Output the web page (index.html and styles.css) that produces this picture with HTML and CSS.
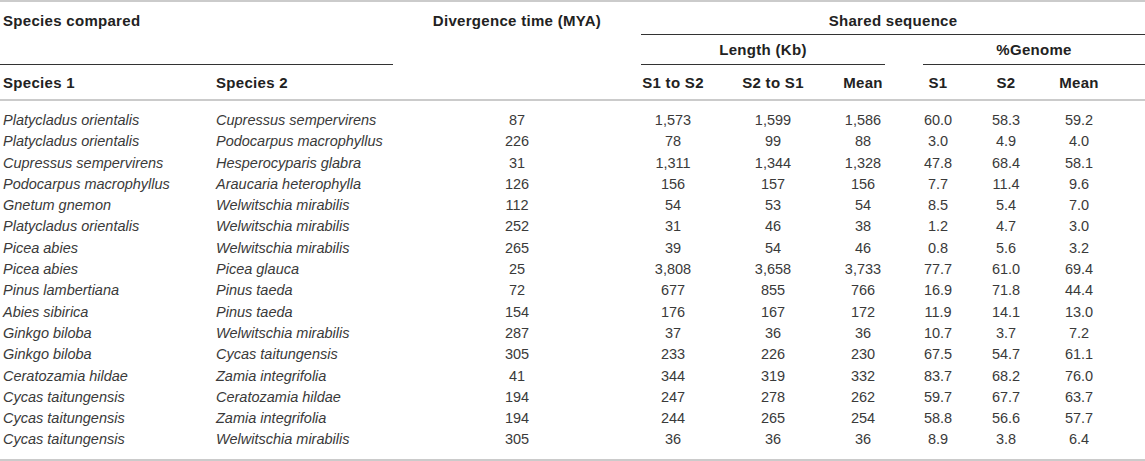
FILE: index.html
```html
<!DOCTYPE html>
<html lang="en">
<head>
    <meta charset="UTF-8">
    <meta name="viewport" content="width=device-width, initial-scale=1.0">
    <title>Shared sequence between species</title>
    <link rel="stylesheet" href="styles.css">
</head>
<body>

    <table class="data-table">
        <colgroup>
            <col class="c-sp1">
            <col class="c-sp2">
            <col class="c-div">
            <col class="c-s1s2">
            <col class="c-s2s1">
            <col class="c-lmean">
            <col class="c-gap">
            <col class="c-g1">
            <col class="c-g2">
            <col class="c-gmean">
            <col class="c-fill">
        </colgroup>
        <thead>
            <tr class="row-a">
                <th colspan="2" rowspan="2" class="left group">Species compared</th>
                <th rowspan="3" class="div-head">Divergence time (MYA)</th>
                <th colspan="8" class="group">Shared sequence</th>
            </tr>
            <tr class="row-b">
                <th colspan="3" class="group sub">Length (Kb)</th>
                <th class="sub"></th>
                <th colspan="4" class="group sub">%Genome</th>
            </tr>
            <tr class="row-c">
                <th class="left last">Species 1</th>
                <th class="left last">Species 2</th>
                <th class="last">S1 to S2</th>
                <th class="last">S2 to S1</th>
                <th class="last">Mean</th>
                <th class="last"></th>
                <th class="last">S1</th>
                <th class="last">S2</th>
                <th class="last">Mean</th>
                <th class="last"></th>
            </tr>
        </thead>
        <tbody>
            <tr><td class="sp">Platycladus orientalis</td><td class="sp">Cupressus sempervirens</td><td>87</td><td>1,573</td><td>1,599</td><td>1,586</td><td></td><td>60.0</td><td>58.3</td><td>59.2</td><td></td></tr>
            <tr><td class="sp">Platycladus orientalis</td><td class="sp">Podocarpus macrophyllus</td><td>226</td><td>78</td><td>99</td><td>88</td><td></td><td>3.0</td><td>4.9</td><td>4.0</td><td></td></tr>
            <tr><td class="sp">Cupressus sempervirens</td><td class="sp">Hesperocyparis glabra</td><td>31</td><td>1,311</td><td>1,344</td><td>1,328</td><td></td><td>47.8</td><td>68.4</td><td>58.1</td><td></td></tr>
            <tr><td class="sp">Podocarpus macrophyllus</td><td class="sp">Araucaria heterophylla</td><td>126</td><td>156</td><td>157</td><td>156</td><td></td><td>7.7</td><td>11.4</td><td>9.6</td><td></td></tr>
            <tr><td class="sp">Gnetum gnemon</td><td class="sp">Welwitschia mirabilis</td><td>112</td><td>54</td><td>53</td><td>54</td><td></td><td>8.5</td><td>5.4</td><td>7.0</td><td></td></tr>
            <tr><td class="sp">Platycladus orientalis</td><td class="sp">Welwitschia mirabilis</td><td>252</td><td>31</td><td>46</td><td>38</td><td></td><td>1.2</td><td>4.7</td><td>3.0</td><td></td></tr>
            <tr><td class="sp">Picea abies</td><td class="sp">Welwitschia mirabilis</td><td>265</td><td>39</td><td>54</td><td>46</td><td></td><td>0.8</td><td>5.6</td><td>3.2</td><td></td></tr>
            <tr><td class="sp">Picea abies</td><td class="sp">Picea glauca</td><td>25</td><td>3,808</td><td>3,658</td><td>3,733</td><td></td><td>77.7</td><td>61.0</td><td>69.4</td><td></td></tr>
            <tr><td class="sp">Pinus lambertiana</td><td class="sp">Pinus taeda</td><td>72</td><td>677</td><td>855</td><td>766</td><td></td><td>16.9</td><td>71.8</td><td>44.4</td><td></td></tr>
            <tr><td class="sp">Abies sibirica</td><td class="sp">Pinus taeda</td><td>154</td><td>176</td><td>167</td><td>172</td><td></td><td>11.9</td><td>14.1</td><td>13.0</td><td></td></tr>
            <tr><td class="sp">Ginkgo biloba</td><td class="sp">Welwitschia mirabilis</td><td>287</td><td>37</td><td>36</td><td>36</td><td></td><td>10.7</td><td>3.7</td><td>7.2</td><td></td></tr>
            <tr><td class="sp">Ginkgo biloba</td><td class="sp">Cycas taitungensis</td><td>305</td><td>233</td><td>226</td><td>230</td><td></td><td>67.5</td><td>54.7</td><td>61.1</td><td></td></tr>
            <tr><td class="sp">Ceratozamia hildae</td><td class="sp">Zamia integrifolia</td><td>41</td><td>344</td><td>319</td><td>332</td><td></td><td>83.7</td><td>68.2</td><td>76.0</td><td></td></tr>
            <tr><td class="sp">Cycas taitungensis</td><td class="sp">Ceratozamia hildae</td><td>194</td><td>247</td><td>278</td><td>262</td><td></td><td>59.7</td><td>67.7</td><td>63.7</td><td></td></tr>
            <tr><td class="sp">Cycas taitungensis</td><td class="sp">Zamia integrifolia</td><td>194</td><td>244</td><td>265</td><td>254</td><td></td><td>58.8</td><td>56.6</td><td>57.7</td><td></td></tr>
            <tr><td class="sp">Cycas taitungensis</td><td class="sp">Welwitschia mirabilis</td><td>305</td><td>36</td><td>36</td><td>36</td><td></td><td>8.9</td><td>3.8</td><td>6.4</td><td></td></tr>
        </tbody>
    </table>

</body>
</html>
```

FILE: styles.css
```css
body {
    margin: 0;
    padding: 0;
    background-color: #ffffff;
    font-family: "Liberation Sans", Arial, sans-serif;
}
.data-table {
    width: 1145px;
    table-layout: fixed;
    border-collapse: separate;
    border-spacing: 0;
    border-top: 2px solid #cbcbcb;
    border-bottom: 2px solid #cbcbcb;
}
/* largura das colunas */
.c-sp1 { width: 213px; }
.c-sp2 { width: 180px; }
.c-div { width: 248px; }
.c-s1s2 { width: 64px; }
.c-s2s1 { width: 136px; }
.c-lmean { width: 44px; }
.c-gap { width: 38px; }
.c-g1 { width: 30px; }
.c-g2 { width: 106px; }
.c-gmean { width: 40px; }
.c-fill { width: 46px; }

th {
    font-size: 15px;
    font-weight: bold;
    letter-spacing: 0.3px;
    line-height: 18px;
    color: #222222;
    text-align: center;
    vertical-align: top;
    padding: 9.5px 0 0 0;
    white-space: nowrap;
}
th.left {
    text-align: left;
    padding-left: 3px;
}
.row-a { height: 33px; }
.row-b { height: 30px; }
.row-c { height: 36px; }
th.sub {
    padding-top: 6.3px;
}
th.group {
    border-bottom: 1px solid #333333;
}
th.last {
    padding-top: 9.3px;
    border-bottom: 2px solid #cbcbcb;
}
th.div-head {
    border-bottom: 2px solid #cbcbcb;
}
td {
    font-size: 14.5px;
    line-height: 21.3px;
    color: #3a3a3a;
    text-align: center;
    padding: 0;
    white-space: nowrap;
}
td.sp {
    font-style: italic;
    text-align: left;
    padding-left: 3px;
}
tbody tr:first-child td {
    padding-top: 9px;
}
tbody tr:last-child td {
    padding-bottom: 8.5px;
}
```
